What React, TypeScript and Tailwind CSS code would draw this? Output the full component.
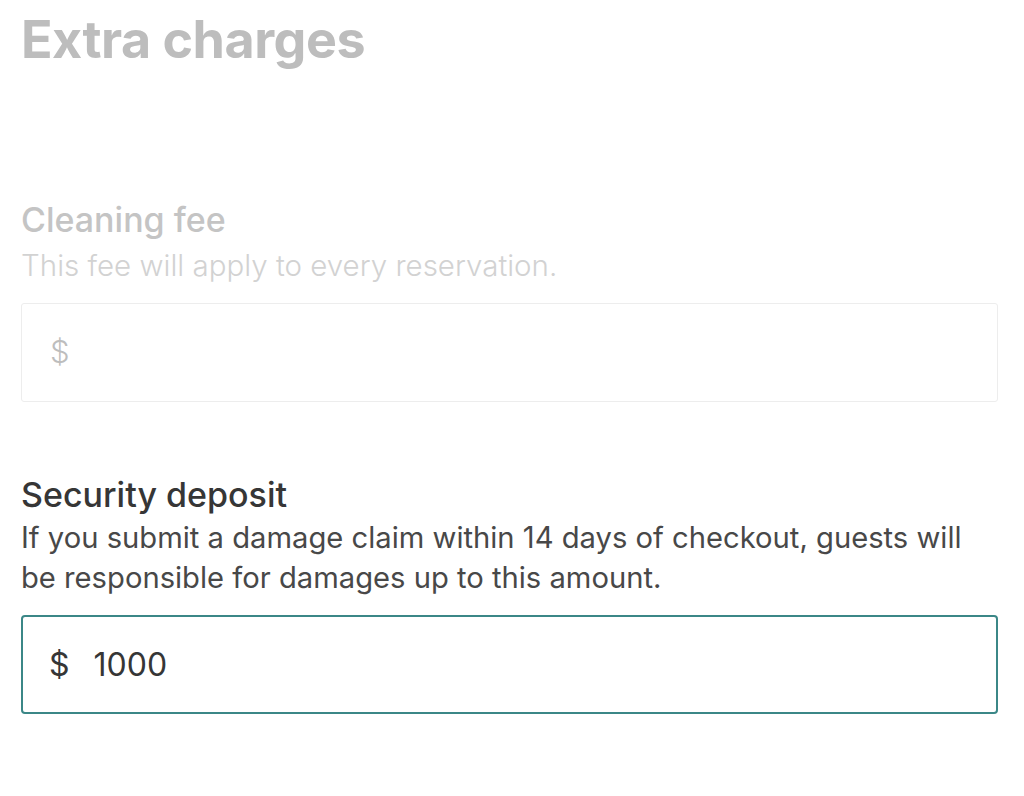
export default function App() {
  return (
    <div
      className="min-h-screen bg-white pl-[21px] pr-[26px] pt-[8px]"
      style={{ fontFamily: "Inter, 'Noto Sans', sans-serif" }}
    >
      <h1 className="text-[52px] leading-[64px] font-bold tracking-[-0.5px] text-[#bdbdbd]">
        Extra charges
      </h1>

      {/* Cleaning fee (disabled look) */}
      <div className="mt-[127px]">
        <h2 className="text-[34px] leading-[42px] font-medium text-[#c4c4c4]">
          Cleaning fee
        </h2>
        <p className="mt-[6px] text-[29.5px] leading-[36px] font-light text-[#d2d2d2]">
          This fee will apply to every reservation.
        </p>
        <div className="mt-[20px] flex h-[99px] items-center rounded-[3px] border border-[#ededed] px-[28px]">
          <span className="text-[31px] font-light text-[#bdbdbd]">$</span>
        </div>
      </div>

      {/* Security deposit */}
      <div className="mt-[72px]">
        <h2 className="text-[34px] leading-[42px] font-medium text-[#363636]">
          Security deposit
        </h2>
        <p className="mt-[2px] max-w-[955px] text-[29.2px] leading-[40px] text-[#484848]">
          If you submit a damage claim within 14 days of checkout, guests will
          be responsible for damages up to this amount.
        </p>
        <div className="mt-[17px] flex h-[99px] items-center gap-[24px] rounded-[4px] border-[2.5px] border-[#3b8787] px-[26px]">
          <span className="text-[32px] text-[#363636]">$</span>
          <span className="text-[32px] text-[#363636]">1000</span>
        </div>
      </div>
    </div>
  );
}
